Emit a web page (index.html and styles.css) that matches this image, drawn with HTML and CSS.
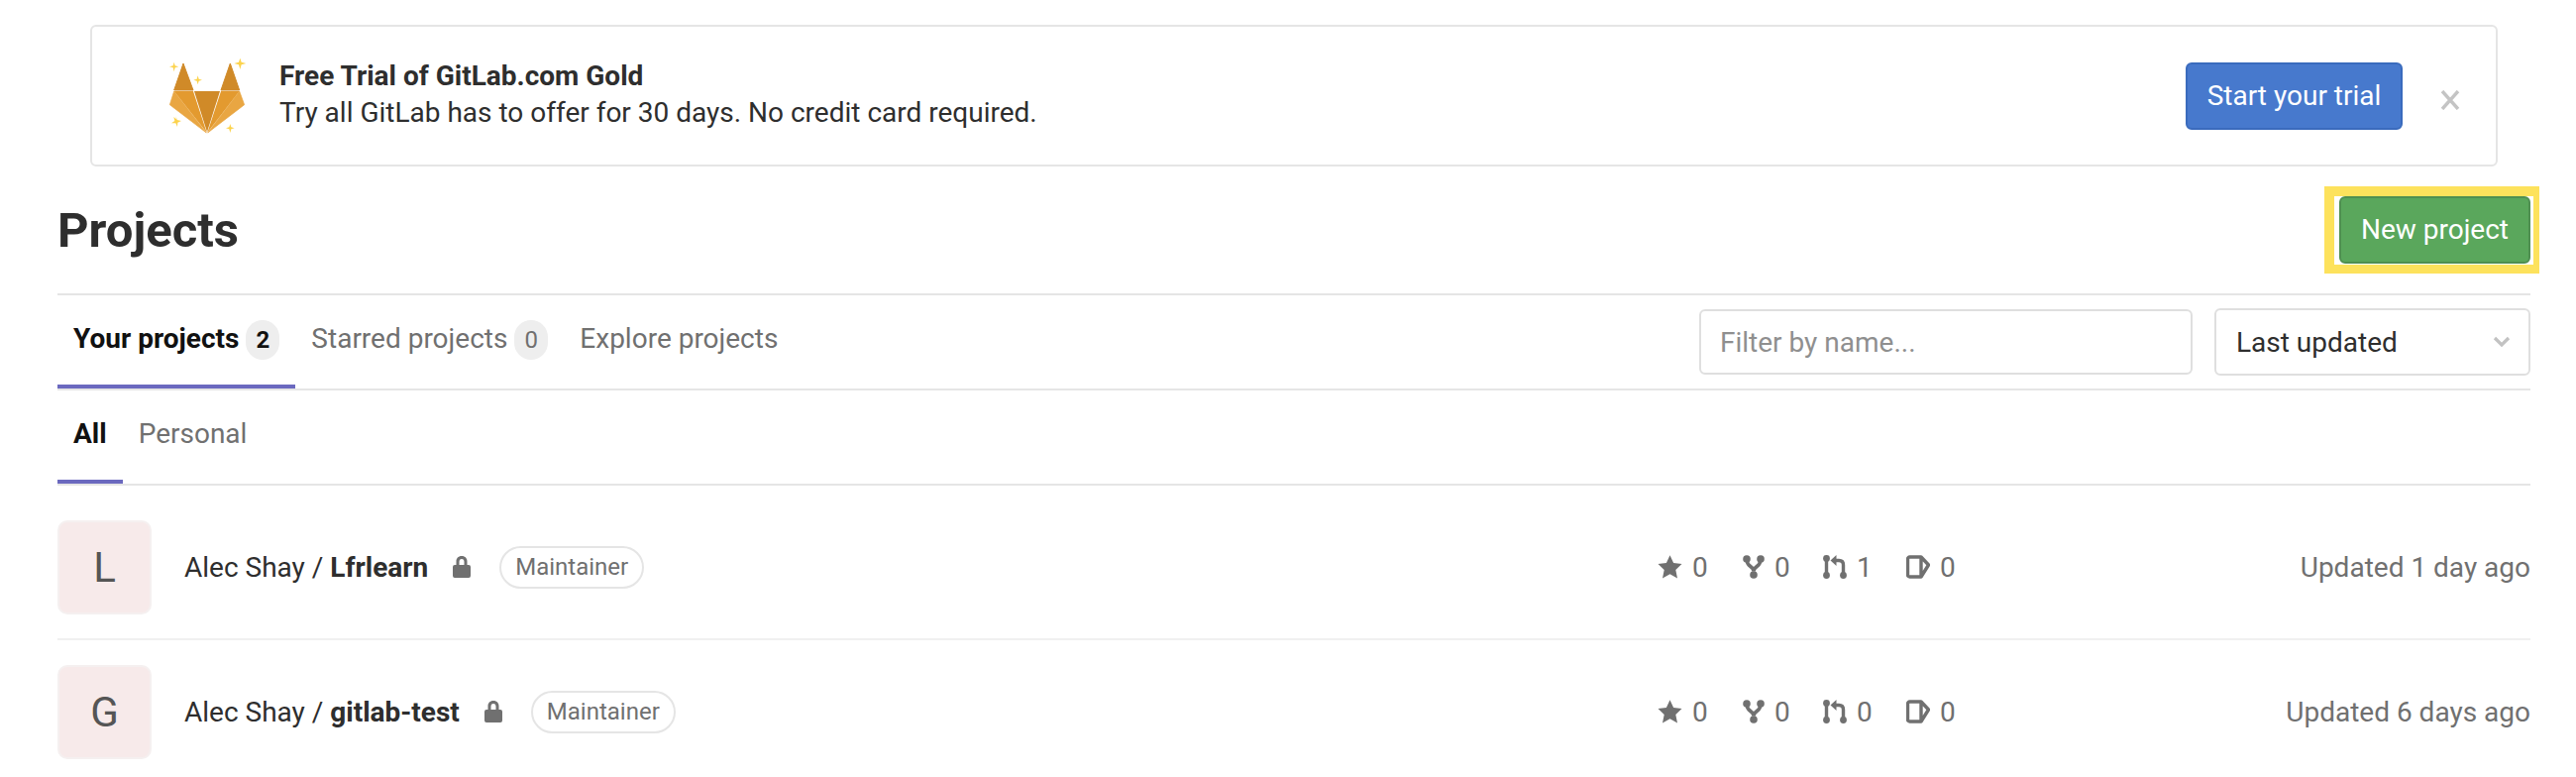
FILE: index.html
```html
<!DOCTYPE html>
<html lang="en">
<head>
<meta charset="UTF-8">
<title>Projects</title>
<link rel="stylesheet" href="styles.css">
</head>
<body>

<div class="container">
  <!-- Trial banner -->
  <div class="banner">
    <svg class="banner-logo" viewBox="120 51 240 240" width="80" height="80">
      <polygon points="168,72 198,153 140,153" fill="#d08a28" stroke="#d08a28" stroke-width="3" stroke-linejoin="round"/>
      <polygon points="310,72 338,153 282,153" fill="#d08a28" stroke="#d08a28" stroke-width="3" stroke-linejoin="round"/>
      <polygon points="140,156 198,156 239,281" fill="#e39a2f"/>
      <polygon points="338,156 282,156 241,281" fill="#e39a2f"/>
      <polygon points="140,156 127,197 238,282" fill="#e9a642" stroke="#e9a642" stroke-width="2" stroke-linejoin="round"/>
      <polygon points="338,156 353,197 242,282" fill="#e9a642" stroke="#e9a642" stroke-width="2" stroke-linejoin="round"/>
      <polygon points="201,156 279,156 240,280" fill="#d08a28"/>
      <path d="M140 68l3 11 11 3-11 3-3 12-3-12-11-3 11-3zM212 109l3 10 10 3-10 3-3 11-3-11-10-3 10-3zM146 232l3 11 13 3-11 5-1 13-5-11-13 0 10-7-3-12 8 7zM310 255l3 10 10 3-10 3-3 11-3-11-10-3 10-3zM340 56l4 12 14 4-14 4-4 14-4-14-14-4 14-4z" fill="#fcd34d"/>
    </svg>
    <div class="banner-text">
      <strong>Free Trial of GitLab.com Gold</strong>
      <span>Try all GitLab has to offer for 30 days. No credit card required.</span>
    </div>
    <a class="btn btn-blue">Start your trial</a>
    <svg class="banner-close" viewBox="0 0 20 20" width="20" height="20">
      <path d="M2 1l16 18M18 1L2 19" stroke="#c4c4c4" stroke-width="3.4" fill="none"/>
    </svg>
  </div>

  <!-- Title -->
  <div class="title-row">
    <h1>Projects</h1>
    <div class="highlight">
      <a class="btn btn-green">New project</a>
    </div>
  </div>

  <!-- Tabs and filters -->
  <div class="tabs-row">
    <ul class="tabs">
      <li class="active">Your projects <span class="badge">2</span></li>
      <li>Starred projects <span class="badge">0</span></li>
      <li>Explore projects</li>
    </ul>
    <div class="filters">
      <input class="filter-input" type="text" placeholder="Filter by name...">
      <div class="sort-select">
        <span>Last updated</span>
        <svg viewBox="0 0 18 12" width="18" height="12">
          <path d="M2 2l7 7 7-7" stroke="#c2c2c2" stroke-width="3.2" fill="none"/>
        </svg>
      </div>
    </div>
  </div>

  <div class="subtabs-row">
    <ul class="tabs">
      <li class="active">All</li>
      <li>Personal</li>
    </ul>
  </div>

  <!-- Project list -->
  <div class="projects">
    <div class="project">
      <div class="avatar">L</div>
      <div class="project-name">
        <span>Alec Shay / <strong>Lfrlearn</strong></span>
        <svg class="lock" viewBox="0 0 18 22" width="18" height="22">
          <path d="M9 0C5.500 0 3.500 2.400 3.500 5.500V9H2a2 2 0 0 0-2 2v9a2 2 0 0 0 2 2h14a2 2 0 0 0 2-2v-9a2 2 0 0 0-2-2h-1.500V5.500C14.500 2.400 12.500 0 9 0zm0 3c1.700 0 2.500 1.100 2.500 2.800V9h-5V5.800C6.500 4.100 7.300 3 9 3z" fill="#707070"/>
        </svg>
        <span class="role">Maintainer</span>
      </div>
      <div class="project-right">
        <div class="stats">
          <span class="stat stat-star"><svg viewBox="0 0 24 24" width="25" height="24"><path d="M12 .3l3.600 7.800 8.400 1-6.200 5.800 1.700 8.500L12 19.200l-7.500 4.200 1.700-8.500L0 9.100l8.400-1z" fill="#707070"/></svg>0</span>
          <span class="stat stat-fork"><svg viewBox="0 0 22 24" width="22" height="24"><path d="M4.500 6.500c0 5 6.500 5 6.500 10M17.500 6.500c0 5-6.500 5-6.500 10" stroke="#707070" stroke-width="3.600" fill="none"/><circle cx="4" cy="4" r="3.800" fill="#707070"/><circle cx="18" cy="4" r="3.800" fill="#707070"/><circle cx="11" cy="20" r="3.800" fill="#707070"/></svg>0</span>
          <span class="stat stat-mr"><svg viewBox="0 0 24 24" width="24" height="24"><path d="M3.500 5v14M20.500 19v-9c0-3-2-4.500-4.500-4.500h-5" stroke="#707070" stroke-width="3.400" fill="none"/><path d="M13.500 0v11L7.500 5.500z" fill="#707070"/><circle cx="3.500" cy="3.500" r="3.400" fill="#707070"/><circle cx="3.500" cy="20.500" r="3.400" fill="#707070"/><circle cx="20.500" cy="20.500" r="3.400" fill="#707070"/></svg>1</span>
          <span class="stat stat-issue"><svg viewBox="0 0 24 24" width="24" height="24"><path d="M3.500 2H15l7.500 8L15 22H3.500a2 2 0 0 1-2-2V4a2 2 0 0 1 2-2zM15 2v20" stroke="#707070" stroke-width="3.400" stroke-linejoin="round" fill="none"/></svg>0</span>
        </div>
        <span class="updated">Updated 1 day ago</span>
      </div>
    </div>

    <div class="project">
      <div class="avatar">G</div>
      <div class="project-name">
        <span>Alec Shay / <strong>gitlab-test</strong></span>
        <svg class="lock" viewBox="0 0 18 22" width="18" height="22">
          <path d="M9 0C5.500 0 3.500 2.400 3.500 5.500V9H2a2 2 0 0 0-2 2v9a2 2 0 0 0 2 2h14a2 2 0 0 0 2-2v-9a2 2 0 0 0-2-2h-1.500V5.500C14.500 2.400 12.500 0 9 0zm0 3c1.700 0 2.500 1.100 2.500 2.800V9h-5V5.800C6.500 4.100 7.300 3 9 3z" fill="#707070"/>
        </svg>
        <span class="role">Maintainer</span>
      </div>
      <div class="project-right">
        <div class="stats">
          <span class="stat stat-star"><svg viewBox="0 0 24 24" width="25" height="24"><path d="M12 .3l3.600 7.800 8.400 1-6.200 5.800 1.700 8.500L12 19.200l-7.500 4.200 1.700-8.500L0 9.100l8.400-1z" fill="#707070"/></svg>0</span>
          <span class="stat stat-fork"><svg viewBox="0 0 22 24" width="22" height="24"><path d="M4.500 6.500c0 5 6.500 5 6.500 10M17.500 6.500c0 5-6.500 5-6.500 10" stroke="#707070" stroke-width="3.600" fill="none"/><circle cx="4" cy="4" r="3.800" fill="#707070"/><circle cx="18" cy="4" r="3.800" fill="#707070"/><circle cx="11" cy="20" r="3.800" fill="#707070"/></svg>0</span>
          <span class="stat stat-mr"><svg viewBox="0 0 24 24" width="24" height="24"><path d="M3.500 5v14M20.500 19v-9c0-3-2-4.500-4.500-4.500h-5" stroke="#707070" stroke-width="3.400" fill="none"/><path d="M13.500 0v11L7.500 5.500z" fill="#707070"/><circle cx="3.500" cy="3.500" r="3.400" fill="#707070"/><circle cx="3.500" cy="20.500" r="3.400" fill="#707070"/><circle cx="20.500" cy="20.500" r="3.400" fill="#707070"/></svg>0</span>
          <span class="stat stat-issue"><svg viewBox="0 0 24 24" width="24" height="24"><path d="M3.500 2H15l7.500 8L15 22H3.500a2 2 0 0 1-2-2V4a2 2 0 0 1 2-2zM15 2v20" stroke="#707070" stroke-width="3.400" stroke-linejoin="round" fill="none"/></svg>0</span>
        </div>
        <span class="updated">Updated 6 days ago</span>
      </div>
    </div>
  </div>
</div>

</body>
</html>
```

FILE: styles.css
```css
/* Project list page */
html, body {
  overflow: hidden;
}
body {
  font-family: Roboto, "Liberation Sans", sans-serif;
  font-size: 28px;
  color: #2e2e2e;
  margin: 0;
  padding: 0;
  background: #fff;
}
.container {
  padding: 25px 46px 0 58px;
}

/* Banner */
.banner {
  display: flex;
  align-items: center;
  height: 143px;
  box-sizing: border-box;
  margin: 0 33px;
  padding: 0 36px 0 76px;
  border: 2px solid #e5e5e5;
  border-radius: 6px;
}
.banner-logo {
  flex: none;
}
.banner-text {
  display: flex;
  flex-direction: column;
  flex: 1;
  margin-left: 33px;
  line-height: 37px;
  margin-top: -4px;
}
.banner-text strong {
  font-weight: 700;
}
.banner-close {
  margin-left: 38px;
  margin-top: 8px;
}
.btn {
  display: block;
  box-sizing: border-box;
  height: 68px;
  line-height: 64px;
  border-radius: 6px;
  color: #fff;
  text-align: center;
}
.btn-blue {
  width: 219px;
  background: #4779cd;
  border: 2px solid #3a6bbd;
}
.btn-green {
  width: 193px;
  background: #5aa75c;
  border: 2px solid #4f8f51;
}

/* Title */
.title-row {
  display: flex;
  justify-content: space-between;
  align-items: center;
  height: 128px;
  border-bottom: 2px solid #e5e5e5;
}
h1 {
  margin: 0;
  font-size: 49px;
  font-weight: 700;
  color: #2e2e2e;
}
.highlight {
  border-style: solid;
  border-color: #fde25c;
  border-width: 10px 6px 9px 10px;
  padding: 0 3px 1px 5px;
  margin-right: -9px;
  background: #fff;
}

/* Tabs */
.tabs-row, .subtabs-row {
  display: flex;
  justify-content: space-between;
  height: 96px;
  box-sizing: border-box;
  border-bottom: 2px solid #e5e5e5;
}
.tabs {
  display: flex;
  list-style: none;
  margin: 0;
  padding: 0;
  color: #707070;
}
.tabs li {
  padding: 27px 16px 0;
  height: 94px;
  box-sizing: border-box;
}
.tabs li.active {
  color: #111;
  font-weight: 700;
  border-bottom: 4px solid #6b69bf;
}
.badge {
  display: inline-block;
  min-width: 34px;
  box-sizing: border-box;
  margin: -4px 0;
  padding: 0 9px;
  background: #eee;
  border-radius: 20px;
  font-size: 24px;
  line-height: 40px;
  text-align: center;
}
.filters {
  display: flex;
  align-items: center;
  gap: 22px;
}
.filter-input {
  width: 498px;
  height: 66px;
  box-sizing: border-box;
  padding: 0 19px;
  font-family: inherit;
  font-size: 28px;
  border: 2px solid #dfdfdf;
  border-radius: 6px;
  outline: none;
}
.filter-input::placeholder {
  color: #8f8f8f;
}
.sort-select {
  display: flex;
  justify-content: space-between;
  align-items: center;
  width: 319px;
  height: 68px;
  box-sizing: border-box;
  padding: 0 18px 0 20px;
  border: 2px solid #dfdfdf;
  border-radius: 6px;
}

/* Projects */
.projects {
  padding-top: 10px;
}
.project {
  display: grid;
  grid-template-columns: 1fr 881px;
  align-items: center;
  position: relative;
  padding: 25px 0 25px 128px;
  min-height: 94px;
  border-bottom: 2px solid #f0f0f0;
}
.avatar {
  position: absolute;
  left: 0;
  top: 25px;
  width: 95px;
  height: 95px;
  box-sizing: border-box;
  background: #f7eaea;
  border: 2px solid #f5f0f0;
  border-radius: 10px;
  font-size: 42px;
  line-height: 91px;
  text-align: center;
  color: #555;
}
.project-name {
  display: flex;
  align-items: center;
}
.project-name strong {
  font-weight: 700;
}
.lock {
  margin-left: 25px;
  flex: none;
}
.role {
  margin-left: 29px;
  height: 43px;
  box-sizing: border-box;
  padding: 0 14px;
  border: 2px solid #e5e5e5;
  border-radius: 22px;
  font-size: 24px;
  line-height: 39px;
  color: #707070;
}
.project-right {
  display: flex;
  justify-content: space-between;
  align-items: center;
  color: #707070;
}
.stats {
  display: flex;
}
.stat {
  display: flex;
  align-items: center;
}
.stat svg {
  margin-right: 10px;
}
.stat-star {
  width: 86px;
}
.stat-fork {
  width: 81px;
}
.stat-mr {
  width: 84px;
}
.stat-issue {
  width: 50px;
}
```
